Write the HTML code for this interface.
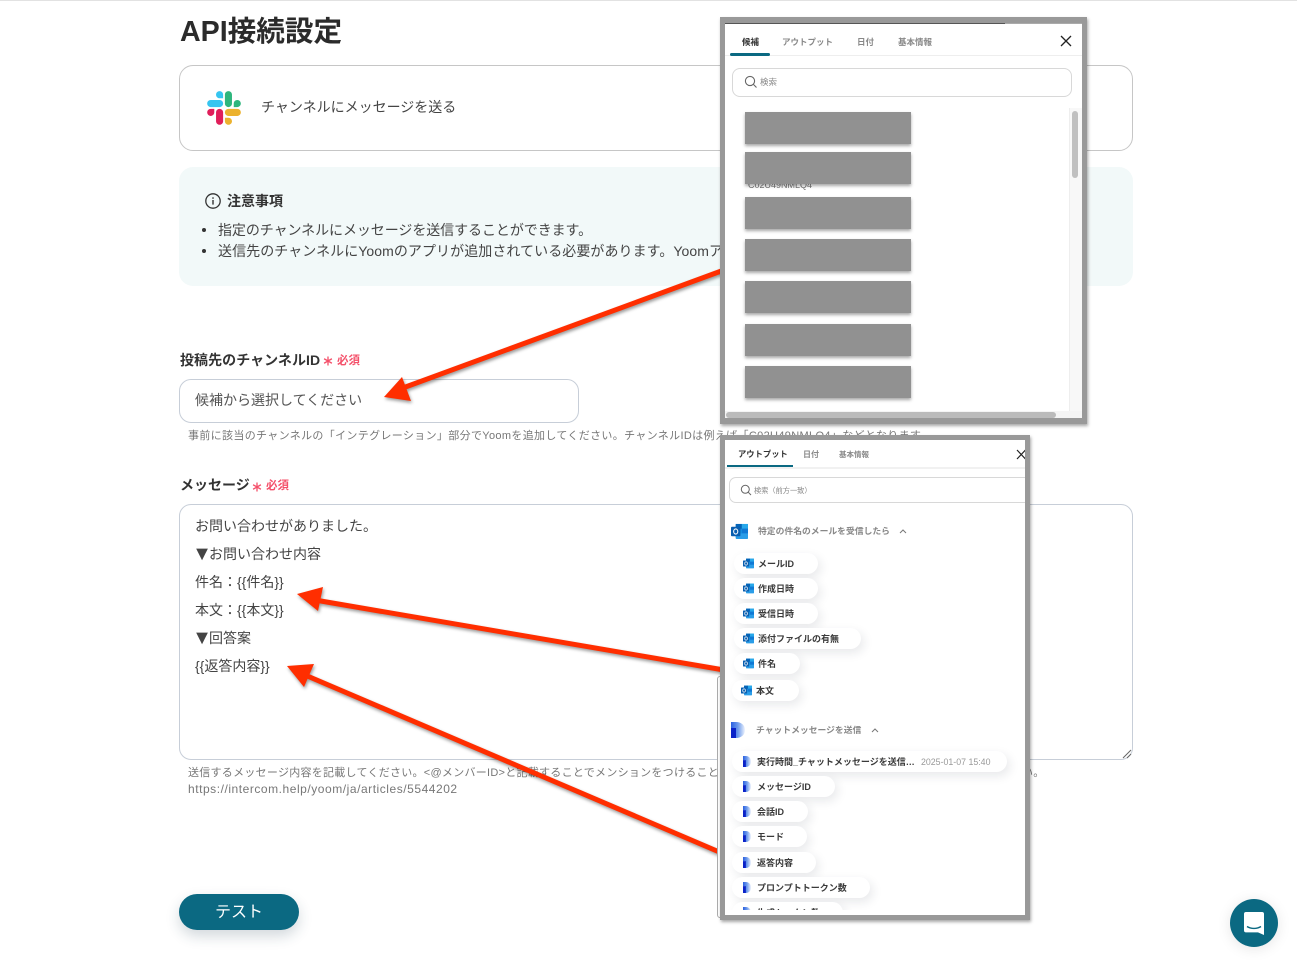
<!DOCTYPE html>
<html lang="ja"><head><meta charset="utf-8"><title>API接続設定</title>
<style>
html,body{margin:0;padding:0;background:#fff}
body{position:relative;width:1297px;height:966px;overflow:hidden;font-family:"Liberation Sans","Noto Sans CJK JP",sans-serif;color:#333}
.a{position:absolute;box-sizing:border-box}
.t{position:absolute;white-space:nowrap}
.rect{position:absolute;left:20px;width:166px;height:32px;background:#919191;box-shadow:0 2px 3px rgba(0,0,0,.35)}
.ov{position:absolute;box-sizing:border-box;border:5px solid #999;background:#fff;box-shadow:1px 2px 3px rgba(0,0,0,.35);overflow:hidden;filter:blur(.3px)}
.tab{position:absolute;white-space:nowrap;font-size:8.5px;font-weight:700;color:#888;line-height:12px}
.pill{position:absolute;box-sizing:border-box;height:21px;border-radius:11px;background:#fff;box-shadow:3px 4px 10px rgba(30,40,60,.1);font-size:9px;font-weight:700;color:#3a3a3a;line-height:21px;white-space:nowrap}
.pill svg{position:absolute;left:9px;top:5px}
.pill span{position:absolute;left:24px;top:1px}
.pd svg{left:11px}
.pd span{left:25px}
.tri{display:inline-block;width:20px;margin:0 -3px;font-size:20px;line-height:0;text-align:center;vertical-align:-1px}
</style></head>
<body>
<svg width="0" height="0" style="position:absolute">
<symbol id="ol" viewBox="0 0 18 18">
<rect x="5" y="1" width="13" height="15" rx="1" fill="#1490df"/>
<rect x="5" y="1" width="6.500" height="5" fill="#0364b8"/>
<rect x="11.500" y="1" width="6.500" height="5" fill="#28a8ea"/>
<rect x="11.500" y="6" width="6.500" height="5" fill="#0f78d4"/>
<path d="M5 11h13v5a1 1 0 0 1-1 1H6a1 1 0 0 1-1-1z" fill="#2a9de8"/>
<rect x="0" y="4" width="10" height="10" rx="1" fill="#0a5fb0"/>
<ellipse cx="5" cy="9" rx="2.200" ry="2.700" fill="none" stroke="#fff" stroke-width="1.100"/>
</symbol>
<linearGradient id="dg" x1="0" y1="0" x2="1" y2="0"><stop offset="0" stop-color="#2a5fe0"/><stop offset=".5" stop-color="#6f9cec"/><stop offset="1" stop-color="#eef3fd"/></linearGradient>
<symbol id="dd" viewBox="0 0 14 16" preserveAspectRatio="none">
<path d="M0 0h5c5 0 9 3 9 8s-4 8-9 8H4V6H0z" fill="url(#dg)"/>
<rect x="0" y="6" width="5" height="10" fill="#0a22c8"/>
</symbol>
<symbol id="ast" viewBox="0 0 10 10">
<path d="M5 0.500V9.500M1.100 2.750 8.900 7.250M8.900 2.750 1.100 7.250" stroke="#f4506a" stroke-width="1.300" fill="none"/>
</symbol>
</svg>

<div class="a" style="left:0;top:0;width:1297px;height:1px;background:#e2e2e2"></div>
<div class="t" style="left:180px;top:12px;font-size:28.6px;font-weight:700;line-height:40px;color:#2b2b2b">API接続設定</div>

<div class="a" style="left:179px;top:65px;width:954px;height:86px;border:1px solid #c6c6c6;border-radius:14px"></div>
<svg class="a" style="left:207px;top:91px" width="34" height="34" viewBox="0 0 127 127">
<path fill="#e01e5a" d="M27.2 80c0 7.3-5.9 13.2-13.2 13.2C6.7 93.2.8 87.3.8 80c0-7.3 5.9-13.2 13.2-13.2h13.2V80zm6.6 0c0-7.3 5.9-13.2 13.2-13.2 7.3 0 13.2 5.9 13.2 13.2v33c0 7.3-5.9 13.2-13.2 13.2-7.3 0-13.2-5.9-13.2-13.2V80z"/>
<path fill="#36c5f0" d="M47 27c-7.3 0-13.2-5.9-13.2-13.2C33.8 6.5 39.7.6 47 .6c7.3 0 13.2 5.9 13.2 13.2V27H47zm0 6.7c7.3 0 13.2 5.9 13.2 13.2 0 7.3-5.9 13.2-13.2 13.2H13.9C6.6 60.1.7 54.2.7 46.9c0-7.3 5.9-13.2 13.2-13.2H47z"/>
<path fill="#2eb67d" d="M99.9 46.9c0-7.3 5.9-13.2 13.2-13.2 7.3 0 13.2 5.9 13.2 13.2 0 7.3-5.9 13.2-13.2 13.2H99.9V46.9zm-6.6 0c0 7.3-5.9 13.2-13.2 13.2-7.3 0-13.2-5.9-13.2-13.2V13.8C66.9 6.5 72.8.6 80.1.6c7.3 0 13.2 5.9 13.2 13.2v33.1z"/>
<path fill="#ecb22e" d="M80.1 99.8c7.3 0 13.2 5.9 13.2 13.2 0 7.3-5.9 13.2-13.2 13.2-7.3 0-13.2-5.9-13.2-13.2V99.8h13.2zm0-6.6c-7.3 0-13.2-5.9-13.2-13.2 0-7.3 5.9-13.2 13.2-13.2h33.1c7.3 0 13.2 5.9 13.2 13.2 0 7.3-5.9 13.2-13.2 13.2H80.1z"/>
</svg>
<div class="t" style="left:261px;top:97px;font-size:14px;line-height:20px;color:#444">チャンネルにメッセージを送る</div>

<div class="a" style="left:179px;top:167px;width:954px;height:119px;background:#f2f9f9;border-radius:14px"></div>
<svg class="a" style="left:205px;top:193px" width="16" height="16" viewBox="0 0 16 16"><circle cx="8" cy="8" r="7.2" fill="none" stroke="#333" stroke-width="1.3"/><rect x="7.3" y="7" width="1.4" height="4.6" fill="#333"/><rect x="7.3" y="4.3" width="1.4" height="1.5" fill="#333"/></svg>
<div class="t" style="left:227px;top:191px;font-size:14px;font-weight:700;line-height:20px;color:#333">注意事項</div>
<div class="a" style="left:202px;top:228px;width:4px;height:4px;border-radius:50%;background:#333"></div>
<div class="a" style="left:202px;top:249px;width:4px;height:4px;border-radius:50%;background:#333"></div>
<div class="t" style="left:218px;top:220px;font-size:14px;line-height:20px;color:#444;letter-spacing:-.07px">指定のチャンネルにメッセージを送信することができます。</div>
<div class="t" style="left:218px;top:241px;font-size:14px;line-height:20px;color:#444;letter-spacing:.07px">送信先のチャンネルにYoomのアプリが追加されている必要があります。Yoomアプリの追加</div>

<div class="t" style="left:180px;top:350px;font-size:14px;font-weight:700;line-height:20px;color:#333;letter-spacing:.05px">投稿先のチャンネルID</div>
<svg class="a" style="left:323px;top:356px" width="10" height="10"><use href="#ast"/></svg>
<div class="t" style="left:337px;top:352px;font-size:11.500px;font-weight:700;line-height:18px;color:#f4506a">必須</div>
<div class="a" style="left:179px;top:379px;width:400px;height:44px;border:1px solid #c7ced8;border-radius:12px"></div>
<div class="t" style="left:195px;top:390px;font-size:14px;line-height:20px;color:#555">候補から選択してください</div>
<div class="t" style="left:188px;top:428px;font-size:11px;line-height:16px;color:#777;letter-spacing:.34px">事前に該当のチャンネルの「インテグレーション」部分でYoomを追加してください。チャンネルIDは例えば「C02U49NMLQ4」などとなります。</div>

<div class="t" style="left:180px;top:475px;font-size:14px;font-weight:700;line-height:20px;color:#333">メッセージ</div>
<svg class="a" style="left:252px;top:482px" width="10" height="10"><use href="#ast"/></svg>
<div class="t" style="left:266px;top:477px;font-size:11.500px;font-weight:700;line-height:18px;color:#f4506a">必須</div>
<div class="a" style="left:179px;top:504px;width:954px;height:256px;border:1px solid #c7ced8;border-radius:12px"></div>
<svg class="a" style="left:1122px;top:749px" width="10" height="10" viewBox="0 0 10 10"><path d="M1 9 9 1M5 9 9 5" stroke="#666" stroke-width="1"/></svg>
<div class="a" style="left:195px;top:512px;font-size:14px;line-height:28px;color:#444;white-space:nowrap">お問い合わせがありました。<br><span class="tri">▼</span>お問い合わせ内容<br>件名：{{件名}}<br>本文：{{本文}}<br><span class="tri">▼</span>回答案<br>{{返答内容}}</div>
<div class="t" style="left:188px;top:765px;font-size:11px;line-height:16px;color:#777;letter-spacing:.27px">送信するメッセージ内容を記載してください。&lt;@メンバーID&gt;と記載することでメンションをつけることができます。なお詳細は以下のヘルプページをご確認ください。</div>
<div class="t" style="left:188px;top:781px;font-size:12px;line-height:16px;color:#777;letter-spacing:.54px">https://intercom.help/yoom/ja/articles/5544202</div>

<div class="a" style="left:179px;top:894px;width:120px;height:36px;border-radius:18px;background:#0b6982;box-shadow:0 6px 14px rgba(30,60,80,.2);color:#fff;font-size:16px;line-height:38px;text-align:center">テスト</div>

<div class="a" style="left:1230px;top:899px;width:48px;height:48px;border-radius:50%;background:#0b6982;box-shadow:0 2px 14px rgba(0,0,0,.1)"></div>
<svg class="a" style="left:1243px;top:911px" width="22" height="25" viewBox="0 0 22 25"><path d="M3 1h16a2 2 0 0 1 2 2v21l-6-2.6H3a2 2 0 0 1-2-2V3a2 2 0 0 1 2-2z" fill="#fff"/><path d="M4 15.5c4 2.6 10 2.6 14 0" fill="none" stroke="#0b6982" stroke-width="1.4"/></svg>

<!-- arrows -->
<svg class="a" style="left:0;top:0;filter:drop-shadow(1px 2px 1.5px rgba(0,0,0,.4))" width="1297" height="966" viewBox="0 0 1297 966">
<path d="M724 270 400 389" stroke="#ff2e00" stroke-width="5" fill="none"/>
<path d="M384 397 402 377 411 401z" fill="#ff2e00"/>
<path d="M724 670 315 600" stroke="#ff2e00" stroke-width="5" fill="none"/>
<path d="M297 594 323 587 318 611z" fill="#ff2e00"/>
<path d="M724 854 305 675" stroke="#ff2e00" stroke-width="5" fill="none"/>
<path d="M287 666 314 664 304 687z" fill="#ff2e00"/>
</svg>

<!-- frame behind overlay 2 -->
<div class="a" style="left:717px;top:676px;width:6px;height:242px;border:1px solid #aaa;border-radius:3px;background:#fff"></div>

<!-- overlay 1 -->
<div class="ov" style="left:720px;top:17px;width:367px;height:407px;border-width:6px 5px 6px 5px">
  <div class="a" style="left:0;top:0;width:280px;height:1px;background:#555"></div>
  <div class="a" style="left:280px;top:0;width:77px;height:1px;background:#aaa"></div>
  <div class="tab" style="left:17px;top:13px;color:#333">候補</div>
  <div class="tab" style="left:57px;top:13px">アウトプット</div>
  <div class="tab" style="left:132px;top:13px">日付</div>
  <div class="tab" style="left:173px;top:13px">基本情報</div>
  <div class="a" style="left:0;top:32px;width:357px;height:1px;background:#eee"></div>
  <div class="a" style="left:5px;top:30px;width:40px;height:2.5px;background:#0b6982;border-radius:2px"></div>
  <svg class="a" style="left:335px;top:12px" width="12" height="12" viewBox="0 0 12 12"><path d="M1 1 11 11M11 1 1 11" stroke="#222" stroke-width="1.3"/></svg>
  <div class="a" style="left:7px;top:45px;width:340px;height:29px;border:1px solid #d8d8d8;border-radius:8px"></div>
  <svg class="a" style="left:19px;top:52px" width="14" height="14" viewBox="0 0 14 14"><circle cx="6" cy="6" r="4.6" fill="none" stroke="#666" stroke-width="1.1"/><path d="M9.4 9.4 12.5 12.5" stroke="#666" stroke-width="1.1"/></svg>
  <div class="t" style="left:35px;top:53px;font-size:8.5px;line-height:12px;color:#888">検索</div>
  <div class="t" style="left:23px;top:156px;font-size:9px;line-height:12px;color:#777">C02U49NMLQ4</div>
  <div class="a" style="left:344px;top:85px;width:13px;height:303px;background:#f8f8f8;border-left:1px solid #eee"></div>
  <div class="a" style="left:347px;top:88px;width:6px;height:67px;background:#c0c0c0;border-radius:3px"></div>
  <div class="a" style="left:0;top:388px;width:357px;height:7px;background:#f5f5f5"></div>
  <div class="a" style="left:1px;top:389px;width:330px;height:6px;background:#bbb;border-radius:3px"></div>
  <div class="rect" style="top:89px"></div>
  <div class="rect" style="top:129px"></div>
  <div class="rect" style="top:174px"></div>
  <div class="rect" style="top:216px"></div>
  <div class="rect" style="top:258px"></div>
  <div class="rect" style="top:301px"></div>
  <div class="rect" style="top:343px"></div>
</div>

<!-- overlay 2 -->
<div class="ov" style="left:720px;top:435px;width:310px;height:485px">
  <div class="tab" style="left:13px;top:8px;color:#333;font-size:8.300px">アウトプット</div>
  <div class="tab" style="left:78px;top:9px;font-size:8px">日付</div>
  <div class="tab" style="left:114px;top:9px;font-size:7.500px">基本情報</div>
  <div class="a" style="left:0;top:27px;width:300px;height:2px;background:#f1f1f1"></div>
  <div class="a" style="left:2px;top:25px;width:66px;height:2px;background:#0b6982"></div>
  <svg class="a" style="left:291px;top:9px" width="10" height="11" viewBox="0 0 10 11"><path d="M1 1 9.5 10M9.500 1 1 10" stroke="#222" stroke-width="1.2"/></svg>
  <div class="a" style="left:4px;top:37px;width:310px;height:26px;border:1px solid #d8d8d8;border-radius:7px"></div>
  <svg class="a" style="left:15px;top:44px" width="12" height="12" viewBox="0 0 12 12"><circle cx="5.300" cy="5.300" r="4" fill="none" stroke="#666" stroke-width="1"/><path d="M8.200 8.200 11 11" stroke="#666" stroke-width="1"/></svg>
  <div class="t" style="left:29px;top:45px;font-size:7.200px;line-height:12px;color:#888">検索（前方一致）</div>

  <svg class="a" style="left:6px;top:83px" width="17" height="17"><use href="#ol"/></svg>
  <div class="t" style="left:33px;top:85px;font-size:8.800px;font-weight:700;line-height:12px;color:#888">特定の件名のメールを受信したら</div>
  <svg class="a" style="left:174px;top:88px" width="8" height="6" viewBox="0 0 8 6"><path d="M1 5 4 2 7 5" fill="none" stroke="#777" stroke-width="1"/></svg>

  <div class="pill" style="left:9px;top:113px;width:84px"><svg width="11" height="11"><use href="#ol"/></svg><span>メールID</span></div>
  <div class="pill" style="left:9px;top:138px;width:84px"><svg width="11" height="11"><use href="#ol"/></svg><span>作成日時</span></div>
  <div class="pill" style="left:9px;top:163px;width:84px"><svg width="11" height="11"><use href="#ol"/></svg><span>受信日時</span></div>
  <div class="pill" style="left:9px;top:188px;width:127px"><svg width="11" height="11"><use href="#ol"/></svg><span>添付ファイルの有無</span></div>
  <div class="pill" style="left:9px;top:213px;width:66px"><svg width="11" height="11"><use href="#ol"/></svg><span>件名</span></div>
  <div class="pill" style="left:7px;top:240px;width:67px"><svg width="11" height="11"><use href="#ol"/></svg><span>本文</span></div>

  <svg class="a" style="left:6px;top:282px" width="14" height="16"><use href="#dd"/></svg>
  <div class="t" style="left:31px;top:284px;font-size:8.800px;font-weight:700;line-height:12px;color:#888">チャットメッセージを送信</div>
  <svg class="a" style="left:146px;top:287px" width="8" height="6" viewBox="0 0 8 6"><path d="M1 5 4 2 7 5" fill="none" stroke="#777" stroke-width="1"/></svg>

  <div class="pill pd" style="left:7px;top:311px;width:275px"><svg width="8" height="11"><use href="#dd"/></svg><span>実行時間_チャットメッセージを送信…</span><span style="left:189px;font-weight:400;color:#999;font-size:8.800px">2025-01-07 15:40</span></div>
  <div class="pill pd" style="left:7px;top:336px;width:103px"><svg width="8" height="11"><use href="#dd"/></svg><span>メッセージID</span></div>
  <div class="pill pd" style="left:7px;top:361px;width:76px"><svg width="8" height="11"><use href="#dd"/></svg><span>会話ID</span></div>
  <div class="pill pd" style="left:7px;top:386px;width:75px"><svg width="8" height="11"><use href="#dd"/></svg><span>モード</span></div>
  <div class="pill pd" style="left:7px;top:412px;width:84px"><svg width="8" height="11"><use href="#dd"/></svg><span>返答内容</span></div>
  <div class="pill pd" style="left:7px;top:437px;width:138px"><svg width="8" height="11"><use href="#dd"/></svg><span>プロンプトトークン数</span></div>
  <div class="pill pd" style="left:7px;top:462px;width:111px"><svg width="8" height="11"><use href="#dd"/></svg><span>生成トークン数</span></div>
  <div class="a" style="left:0;top:470px;width:300px;height:5px;background:#fff"></div>
</div>
</body></html>
